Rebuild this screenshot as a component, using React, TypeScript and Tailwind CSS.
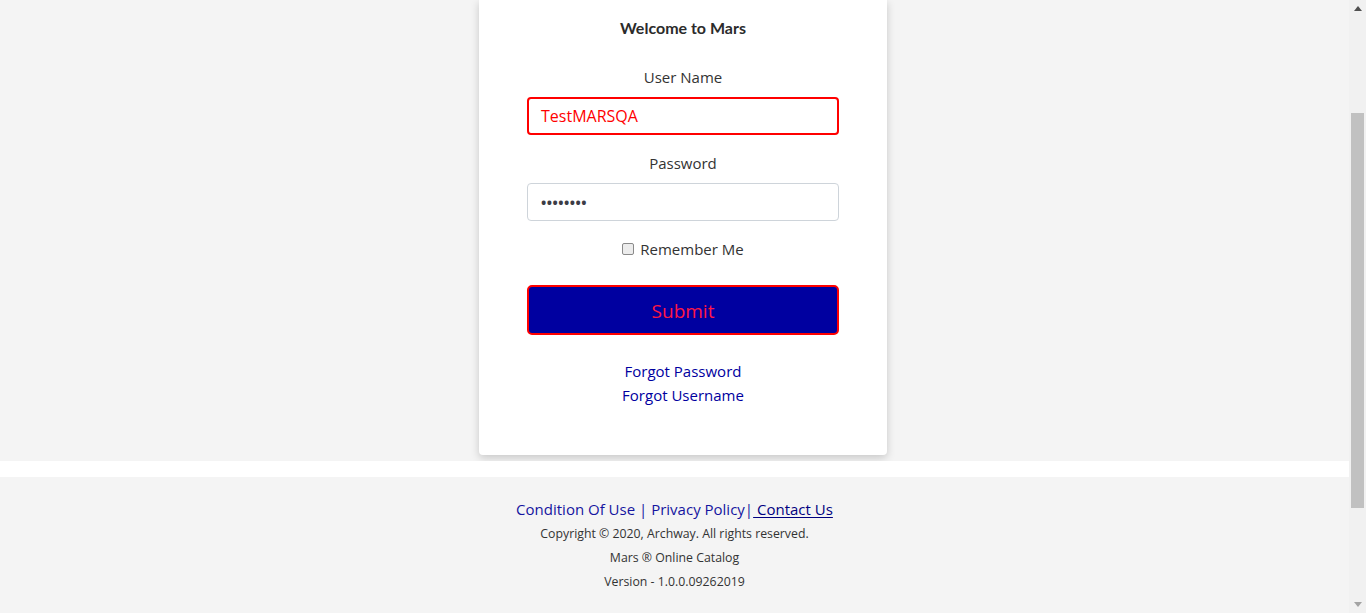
const sans = "font-['Open_Sans','Noto_Sans',sans-serif]";

function LoginCard() {
  return (
    <div className="w-[408px] bg-white rounded-b-[4px] shadow-[0_3px_8px_rgba(0,0,0,0.18)] pt-[18px] pb-[48px] flex flex-col items-center">
      <h1 className="text-[16px] leading-[20px] font-bold text-[#2b2b2b] font-['Lato','Noto_Sans',sans-serif]">Welcome to Mars</h1>

      <label className="mt-[27px] text-[15px] leading-[24px] text-[#333]">User Name</label>
      <div className="mt-[8px] w-[312px] h-[38px] border-2 border-[#ff0000] rounded-[4px] flex items-center px-[12px]">
        <span className="text-[16px] text-[#ff0000]">TestMARSQA</span>
      </div>

      <label className="mt-[16px] text-[15px] leading-[24px] text-[#333]">Password</label>
      <div className="mt-[8px] w-[312px] h-[38px] border border-[#ced4da] rounded-[4px] flex items-center px-[13px]">
        <span className="text-[14px] font-bold tracking-[0.5px] text-[#3c3c46]">••••••••</span>
      </div>

      <div className="mt-[16px] h-[24px] flex items-center gap-[6px]">
        <span className="w-[12px] h-[12px] rounded-[2px] border border-[#8a8a8a] bg-[#ececec]" />
        <span className="text-[15px] text-[#333]">Remember Me</span>
      </div>

      <button className="mt-[24px] w-[312px] h-[50px] bg-[#0000a0] border-2 border-[#ff0000] rounded-[5px] text-[19px] pt-[2px] text-[#ff1744]">
        Submit
      </button>

      <a className="mt-[24px] text-[15px] leading-[24px] text-[#0000a0]">Forgot Password</a>
      <a className="text-[15px] leading-[24px] text-[#0000a0]">Forgot Username</a>
    </div>
  );
}

function Footer() {
  return (
    <footer className="bg-[#f4f4f4] pt-[20px] pb-[19px] flex flex-col items-center text-[#333]">
      <div className="text-[15px] leading-[24px]">
        <a className="text-[#1414a0]">Condition Of Use</a>
        <span className="text-[#1414a0]"> | </span>
        <a className="text-[#1414a0]">Privacy Policy</a>
        <span className="text-[#1414a0]">|</span>
        <a className="text-[#000080] underline underline-offset-2"> Contact Us</a>
      </div>
      <p className="text-[12.3px] leading-[24px] mt-[1px]">Copyright © 2020, Archway. All rights reserved.</p>
      <p className="text-[12.3px] leading-[24px]">Mars ® Online Catalog</p>
      <p className="text-[12.3px] leading-[24px]">Version - 1.0.0.09262019</p>
    </footer>
  );
}

function Scrollbar() {
  return (
    <div className="w-[17px] h-[613px] bg-[#f1f1f1] flex flex-col items-center shrink-0">
      <div className="h-[17px] flex items-center justify-center">
        <svg width="8" height="5" viewBox="0 0 8 5"><path d="M4 0L8 5H0z" fill="#505050" /></svg>
      </div>
      <div className="mt-[96px] w-[13px] h-[395px] bg-[#c1c1c1]" />
      <div className="flex-1" />
      <div className="h-[17px] flex items-center justify-center">
        <svg width="8" height="5" viewBox="0 0 8 5"><path d="M0 0H8L4 5z" fill="#a3a3a3" /></svg>
      </div>
    </div>
  );
}

export default function App() {
  return (
    <div className={`w-[1366px] h-[613px] flex overflow-hidden ${sans}`}>
      <div className="flex-1 flex flex-col">
        <main className="bg-[#f4f4f4] h-[461px] flex justify-center pl-[17px]">
          <div className="self-start">
            <LoginCard />
          </div>
        </main>
        <div className="h-[16px] bg-white" />
        <Footer />
      </div>
      <Scrollbar />
    </div>
  );
}
